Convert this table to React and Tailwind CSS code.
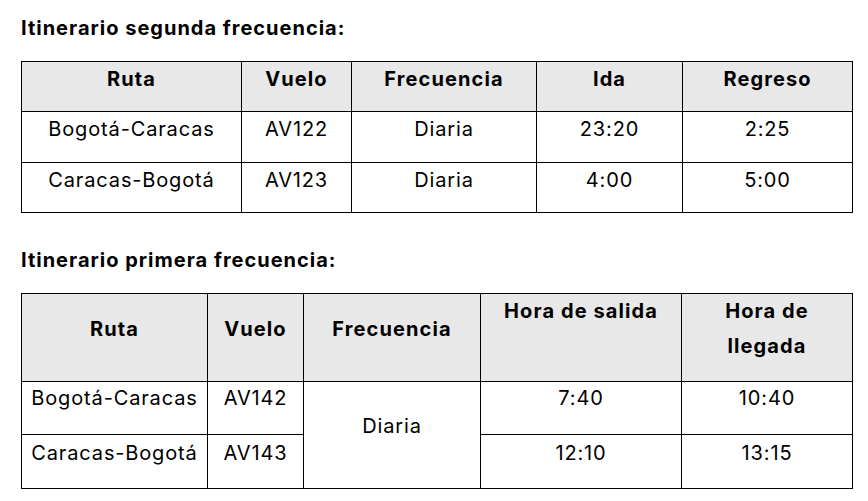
import React from 'react';

const font = { fontFamily: 'Inter, "Noto Sans", sans-serif' };

function App() {
  const seg = [
    ['Bogotá-Caracas', 'AV122', 'Diaria', '23:20', '2:25'],
    ['Caracas-Bogotá', 'AV123', 'Diaria', '4:00', '5:00'],
  ];

  return (
    <div className="min-h-screen bg-white text-black pl-[21px] pt-[14px] tracking-[0.85px]" style={font}>
      {/* Primera tabla */}
      <h2 className="text-[20px] font-bold leading-[28px] tracking-[1px]">Itinerario segunda frecuencia:</h2>
      <table className="mt-[19px] border-collapse table-fixed w-[831px] text-[20px]">
        <colgroup>
          <col className="w-[220px]" />
          <col className="w-[110px]" />
          <col className="w-[185px]" />
          <col className="w-[146px]" />
          <col className="w-[170px]" />
        </colgroup>
        <thead>
          <tr className="bg-[#e8e8e8] h-[50px]">
            {['Ruta', 'Vuelo', 'Frecuencia', 'Ida', 'Regreso'].map((h) => (
              <th key={h} className="border border-black align-top font-bold leading-[34px] p-0 tracking-[1.1px]">
                {h}
              </th>
            ))}
          </tr>
        </thead>
        <tbody>
          {seg.map((r, i) => (
            <tr key={i} className={i === 0 ? 'h-[51px]' : 'h-[50px]'}>
              {r.map((c, j) => (
                <td key={j} className="border border-black align-top text-center leading-[35px] p-0">
                  {c}
                </td>
              ))}
            </tr>
          ))}
        </tbody>
      </table>

      {/* Segunda tabla */}
      <h2 className="mt-[33px] text-[20px] font-bold leading-[28px] tracking-[1px]">Itinerario primera frecuencia:</h2>
      <table className="mt-[19px] border-collapse table-fixed w-[831px] text-[20px]">
        <colgroup>
          <col className="w-[186px]" />
          <col className="w-[96px]" />
          <col className="w-[177px]" />
          <col className="w-[201px]" />
          <col className="w-[171px]" />
        </colgroup>
        <thead>
          <tr className="bg-[#e8e8e8] h-[87px] tracking-[1.1px]">
            <th className="border border-black align-middle font-bold leading-[35px] p-0 pb-[17px]">Ruta</th>
            <th className="border border-black align-middle font-bold leading-[35px] p-0 pb-[17px]">Vuelo</th>
            <th className="border border-black align-middle font-bold leading-[35px] p-0 pb-[17px]">Frecuencia</th>
            <th className="border border-black align-top font-bold leading-[35px] p-0 pb-[17px]">Hora de salida</th>
            <th className="border border-black align-top font-bold leading-[35px] p-0 pb-[17px] px-[40px]">Hora de llegada</th>
          </tr>
        </thead>
        <tbody>
          <tr className="h-[53px]">
            <td className="border border-black align-top text-center leading-[32px] p-0">Bogotá-Caracas</td>
            <td className="border border-black align-top text-center leading-[32px] p-0">AV142</td>
            <td rowSpan={2} className="border border-black align-middle text-center leading-[32px] p-0 pb-[18px]">
              Diaria
            </td>
            <td className="border border-black align-top text-center leading-[32px] p-0">7:40</td>
            <td className="border border-black align-top text-center leading-[32px] p-0">10:40</td>
          </tr>
          <tr className="h-[54px]">
            <td className="border border-black align-top text-center leading-[32px] p-0 pt-[2px]">Caracas-Bogotá</td>
            <td className="border border-black align-top text-center leading-[32px] p-0 pt-[2px]">AV143</td>
            <td className="border border-black align-top text-center leading-[32px] p-0 pt-[2px]">12:10</td>
            <td className="border border-black align-top text-center leading-[32px] p-0 pt-[2px]">13:15</td>
          </tr>
        </tbody>
      </table>
    </div>
  );
}

export default App;
